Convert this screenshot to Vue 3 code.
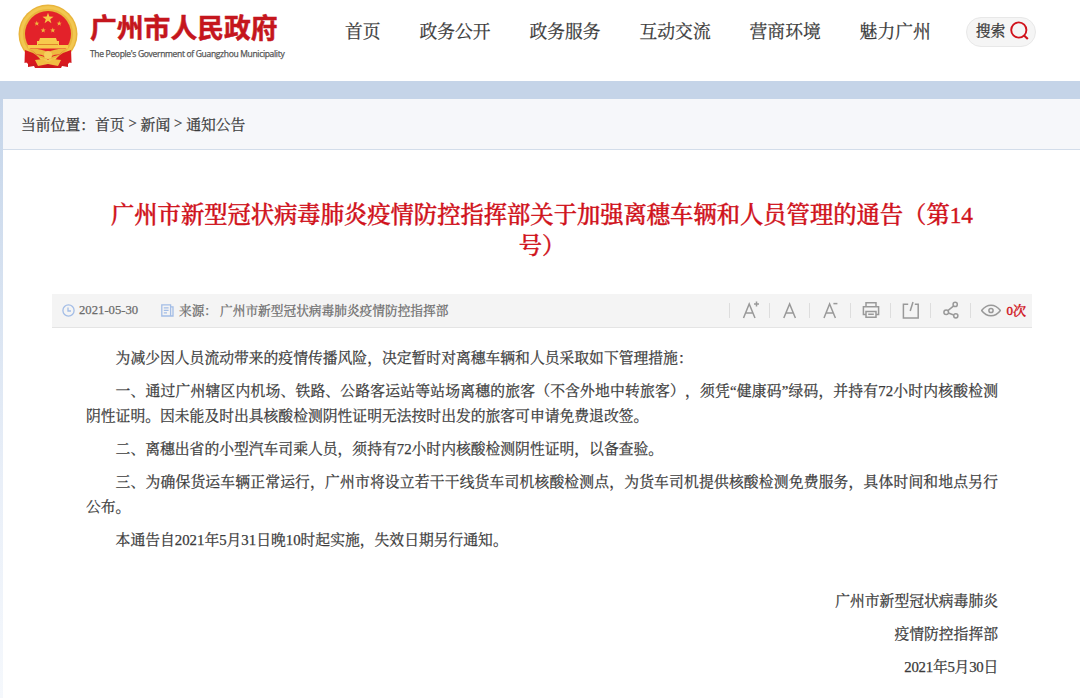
<template>
  <div class="page">
    <header class="header">
      <a class="brand" href="#">
        <svg class="emblem" viewBox="0 0 60 66" width="60" height="66">
          <path d="M7 44 L53 44 L53.5 59 L50 58 L50 63 L44 62 L43 64 L17 64 L16 62 L10 63 L10 58 L6.5 59 Z" fill="#cf1a1f" />
          <circle cx="30" cy="30" r="29.5" fill="#e9b53c" />
          <circle cx="30" cy="30" r="26.5" fill="none" stroke="#f2c750" stroke-width="3" />
          <circle cx="30" cy="30" r="23" fill="#e3222a" />
          <polygon :points="star(30, 14.5, 5.8)" fill="#f6c945" />
          <polygon v-for="(s, i) in smallStars" :key="i" :points="star(s[0], s[1], 2.7)" fill="#f0bb3e" />
          <path d="M22 34 H38 L39 37 H41 V41 H50 V44.5 H10 V41 H19 V37 H21 Z" fill="#f7ca4c" />
          <path d="M20 40.5 H40" stroke="#e0872b" stroke-width="1" />
          <path d="M7 46 L15 49 Q22 53 25 60 L10 60 L7 57 Z" fill="#d8191f" />
          <path d="M53 46 L45 49 Q38 53 35 60 L50 60 L53 57 Z" fill="#d8191f" />
          <path d="M14 45 H46 L41 51 Q34 51 30 56 Q26 51 19 51 Z" fill="#e3222a" />
          <path d="M12 45 Q22 44 30 48.5 Q38 44 48 45 L41 50.5 Q34 50 30 55 Q26 50 19 50.5 Z" fill="#edb93f" />
          <circle cx="30" cy="51" r="4" fill="#f6cf5c" />
          <path d="M17 56 L25 55 L30 59 L35 55 L43 56 L40 62 L30 60 L20 62 Z" fill="#f1bd42" />
          <path d="M23 64 Q30 57 37 64 Z" fill="#c9161c" />
        </svg>
        <span class="brand-text">
          <strong class="brand-name">广州市人民政府</strong>
          <span class="brand-sub">The People's Government of Guangzhou Municipality</span>
        </span>
      </a>
      <nav class="nav">
        <a v-for="item in navItems" :key="item" class="nav-link" href="#">{{ item }}</a>
      </nav>
      <button class="search" type="button">
        <span>搜索</span>
        <svg viewBox="0 0 20 20" width="20" height="20" fill="none" stroke="#d0121b" stroke-width="1.9">
          <circle cx="9.8" cy="9" r="7.6" />
          <path d="M14.8 14.2 L18.8 18" stroke-width="2.2" />
        </svg>
      </button>
    </header>

    <main class="main">
      <div class="crumbs">
        <span class="crumbs-label">当前位置：</span>
        <a href="#">首页</a><i>&gt;</i><a href="#">新闻</a><i>&gt;</i><a href="#">通知公告</a>
      </div>

      <article class="article">
        <h1 class="title">广州市新型冠状病毒肺炎疫情防控指挥部关于加强离穗车辆和人员管理的通告（第14<br>号）</h1>

        <div class="meta">
          <svg class="clock" viewBox="0 0 13 13" width="13" height="13" fill="none" stroke="#a3bde6" stroke-width="1.3">
            <circle cx="6.5" cy="6.5" r="5.6" />
            <path d="M6 3.6 V7 H9" />
          </svg>
          <span class="date">2021-05-30</span>
          <svg class="doc" viewBox="0 0 13 13" width="13" height="13" fill="none" stroke="#a3bde6" stroke-width="1.3">
            <path d="M.8 .8 H9.6 V12 H.8 Z M9.6 2.8 H12 V12 H9.6" />
            <path d="M2.8 3.8 H7.6 M2.8 6.3 H7.6 M2.8 8.8 H6" />
          </svg>
          <span class="source-label">来源：</span>
          <span class="source">广州市新型冠状病毒肺炎疫情防控指挥部</span>

          <ul class="tools">
            <li>
              <svg viewBox="0 0 20 20">
                <path d="M3.5 18 L9.2 4 L15 18 M5.7 13 H12.8" />
                <path d="M14 4 H19 M16.5 1.5 V6.5" />
              </svg>
            </li>
            <li>
              <svg viewBox="0 0 20 20"><path d="M3.8 18 L9.6 4 L15.4 18 M6 13 H13.2" /></svg>
            </li>
            <li>
              <svg viewBox="0 0 20 20">
                <path d="M4 18 L9.6 4 L15.4 18 M6 13 H13.2" />
                <path d="M13.4 3.6 H17.4" />
              </svg>
            </li>
            <li>
              <svg viewBox="0 0 20 20">
                <path d="M5 6.5 V2.8 H15 V6.5 M5 14.5 H2.4 V6.8 H17.6 V14.5 H15" />
                <path d="M5 11.5 H15 V17.2 H5 Z M7.2 14.3 H12.8" />
              </svg>
            </li>
            <li>
              <svg viewBox="0 0 20 20">
                <path d="M7.2 4.2 H2.4 V18 H17.2 V4.2 H13.8" />
                <path d="M9.2 11 L12 2" />
              </svg>
            </li>
            <li>
              <svg viewBox="0 0 20 20">
                <circle cx="14.2" cy="4.4" r="2.1" />
                <circle cx="5.2" cy="12.2" r="2.3" />
                <circle cx="14.8" cy="15.8" r="2.1" />
                <path d="M12.7 5.9 L6.9 10.6 M7.4 13 L12.7 15" />
              </svg>
            </li>
            <li class="views">
              <svg viewBox="0 0 20 20">
                <path d="M.6 10.5 Q4.6 5.2 10 5.2 T19.4 10.5 Q15.4 15.8 10 15.8 T.6 10.5 Z" />
                <circle cx="10" cy="10.5" r="2.1" />
              </svg>
              <span>0次</span>
            </li>
          </ul>
        </div>

        <div class="content">
          <p v-for="(lines, i) in paragraphs" :key="i">
            <span v-for="line in lines" :key="line" class="line">{{ line }}</span>
          </p>
        </div>

        <div class="signature">
          <p>广州市新型冠状病毒肺炎</p>
          <p>疫情防控指挥部</p>
          <p class="signature-date">2021年5月30日</p>
        </div>
      </article>
    </main>
  </div>
</template>

<script setup>
const navItems = ['首页', '政务公开', '政务服务', '互动交流', '营商环境', '魅力广州'];

const smallStars = [[18.8, 19.5], [41.2, 19.5], [25.2, 26.3], [34.8, 26.3]];

const paragraphs = [
  ['为减少因人员流动带来的疫情传播风险，决定暂时对离穗车辆和人员采取如下管理措施：'],
  [
    '一、通过广州辖区内机场、铁路、公路客运站等站场离穗的旅客（不含外地中转旅客），须凭“健康码”绿码，并持有72小时内核酸检测',
    '阴性证明。因未能及时出具核酸检测阴性证明无法按时出发的旅客可申请免费退改签。',
  ],
  ['二、离穗出省的小型汽车司乘人员，须持有72小时内核酸检测阴性证明，以备查验。'],
  [
    '三、为确保货运车辆正常运行，广州市将设立若干干线货车司机核酸检测点，为货车司机提供核酸检测免费服务，具体时间和地点另行',
    '公布。',
  ],
  ['本通告自2021年5月31日晚10时起实施，失效日期另行通知。'],
];

// Five-pointed star around (cx, cy)
const star = (cx, cy, r) => {
  const points = [];
  for (let i = 0; i < 10; i++) {
    const radius = i % 2 ? r * 0.4 : r;
    const angle = (Math.PI / 5) * i - Math.PI / 2;
    points.push(`${(cx + radius * Math.cos(angle)).toFixed(2)},${(cy + radius * Math.sin(angle)).toFixed(2)}`);
  }
  return points.join(' ');
};
</script>

<style>
body {
  background: #fff;
}
</style>

<style scoped>
.page {
  height: 698px;
  display: flex;
  flex-direction: column;
  overflow: hidden;
  box-sizing: border-box;
  font-family: "Liberation Serif", "Noto Serif CJK SC", "Noto Sans CJK SC", serif;
  color: #3a3a3a;
  white-space: nowrap;
  text-spacing-trim: space-all;
  -webkit-text-stroke: 0.25px currentColor;
}

a {
  color: inherit;
  text-decoration: none;
}

.header {
  height: 81px;
  flex: none;
  display: flex;
  align-items: flex-start;
  background: #fff;
}

.brand {
  display: flex;
  width: 327px;
  padding: 4px 0 0 18px;
}

.emblem {
  flex: none;
}

.brand-text {
  display: flex;
  flex-direction: column;
  padding: 4px 0 0 12px;
}

.brand-name {
  font: 700 26.8px/38px "Noto Sans CJK SC", sans-serif;
  color: #c5161d;
  -webkit-text-stroke-width: 0.5px;
}

.brand-sub {
  font: 8.5px/12px "Open Sans", sans-serif;
  color: #555;
  letter-spacing: -0.32px;
  margin-top: 2px;
}

.nav {
  display: flex;
  gap: 38.9px;
  padding-top: 18px;
}

.nav-link {
  font-size: 17.8px;
  line-height: 28px;
}

.search {
  display: flex;
  align-items: center;
  gap: 4px;
  height: 30px;
  width: 70px;
  margin: 17px 0 0 35px;
  padding: 0 0 2px 9px;
  box-sizing: border-box;
  border: 1px solid #e8e8e8;
  border-radius: 15px;
  background: #f5f5f5;
  color: #333;
  font: 14.8px/20px "Liberation Serif", "Noto Serif CJK SC", "Noto Sans CJK SC", serif;
}

.search svg {
  flex: none;
}

.main {
  flex: 1;
  padding: 18px 0 0 3px;
  background: linear-gradient(#c5d4e8 18px, #c9d8eb 60px, #e9eff8 400px, #f5f8fc);
}

.crumbs {
  height: 51px;
  box-sizing: border-box;
  display: flex;
  align-items: center;
  padding: 0 0 2px 18px;
  border-bottom: 1px solid #d3ddea;
  background: #f6f7fa;
  font-size: 14.8px;
}

.crumbs i {
  font-style: normal;
  width: 16px;
  text-align: center;
}

.article {
  height: 548px;
  padding: 50px 48px 0 49px;
  box-sizing: border-box;
  background: #fff;
}

.title {
  margin: 0;
  text-align: center;
  font-size: 23.3px;
  font-weight: 500;
  line-height: 31px;
  color: #d0121b;
  -webkit-text-stroke-width: 0.4px;
}

.meta {
  display: flex;
  align-items: center;
  height: 34px;
  margin-top: 32px;
  padding: 0 6px 1px 10px;
  box-sizing: border-box;
  border-bottom: 1px solid #e4e4e4;
  background: #f4f4f4;
  font-size: 12.7px;
  color: #6c6c6c;
}

.date {
  width: 77px;
  margin-left: 4px;
}

.doc {
  margin: 0 5px 0 5px;
}

.source-label,
.source {
  padding-bottom: 2px;
}

.source {
  margin-left: 3px;
}

.tools {
  display: flex;
  margin: 0 0 0 auto;
  padding: 0;
  list-style: none;
}

.tools li {
  display: flex;
  align-items: center;
  width: 40.3px;
  height: 20px;
}

.tools li::before {
  content: "";
  width: 1px;
  height: 15px;
  margin-right: 10px;
  background: #ddd;
}

.tools svg {
  width: 20px;
  height: 20px;
  flex: none;
  fill: none;
  stroke: #999;
  stroke-width: 1.5;
}

.tools .views {
  width: auto;
}

.views span {
  margin-left: 5px;
  padding-bottom: 2px;
  font-size: 13px;
  color: #d0121b;
  -webkit-text-stroke-width: 0.4px;
}

.content {
  padding: 18px 34px 0 34px;
  font-size: 14.8px;
  line-height: 24.7px;
}

.content p {
  margin: 0 0 8.4px;
  text-indent: 2em;
}

.line {
  display: block;
}

/* full lines stretch to the right edge, closing lines keep their own width */
.line:not(:last-child) {
  text-align-last: justify;
}

.line + .line {
  text-indent: 0;
}

.signature {
  padding: 28px 34px 0 0;
  text-align: right;
  font-size: 14.8px;
  line-height: 24.7px;
}

.signature p {
  margin: 0 0 8.4px;
}

.signature .signature-date {
  letter-spacing: -0.25px;
}
</style>
